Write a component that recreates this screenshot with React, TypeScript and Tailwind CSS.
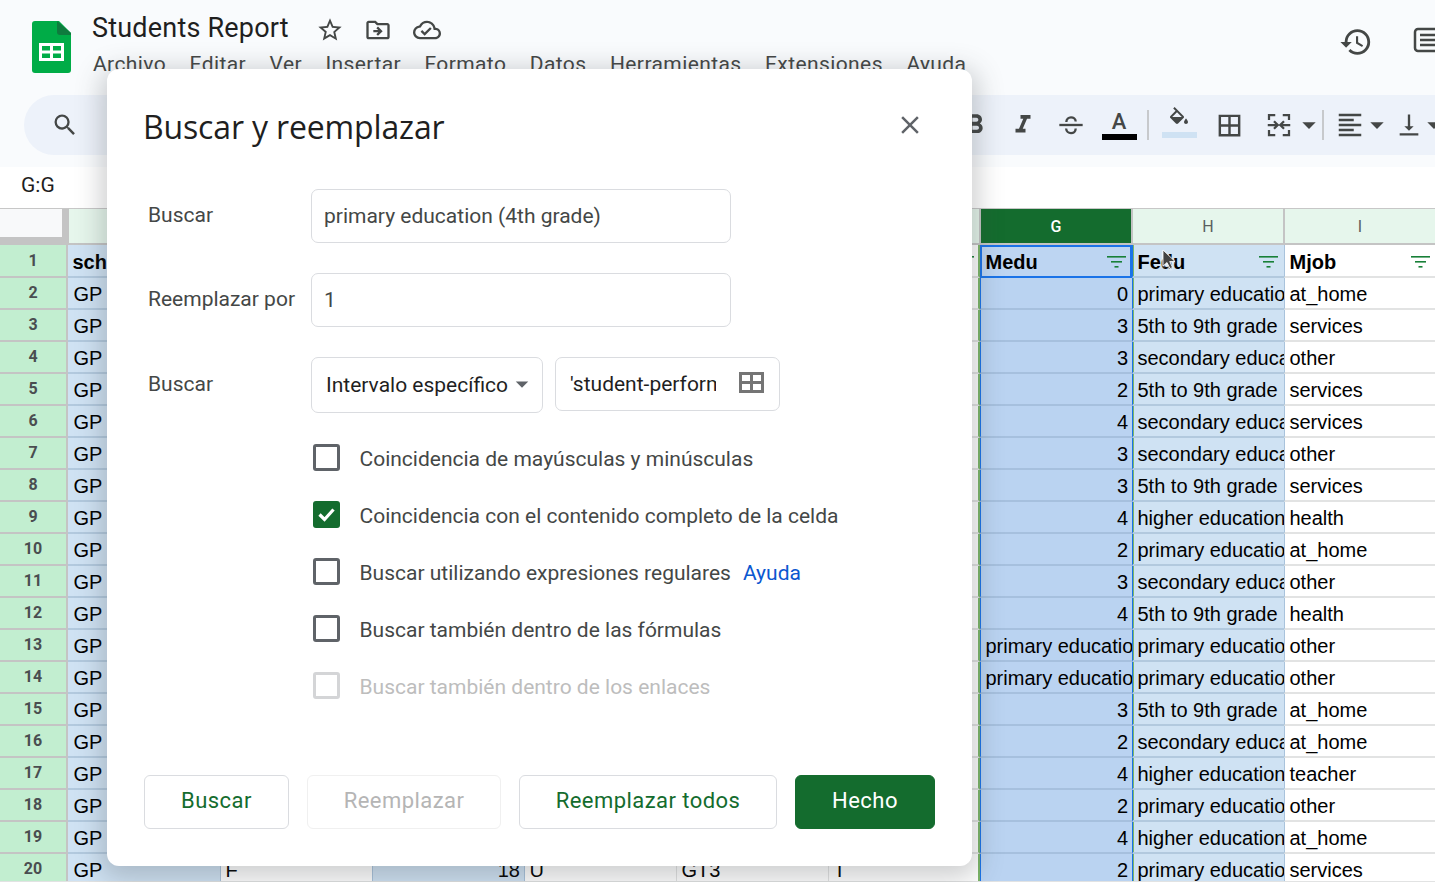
import React from "react";
import {
  MdStarBorder, MdOutlineDriveFileMove, MdOutlineCloudDone, MdHistory, MdSearch, MdUndo,
  MdFormatBold, MdFormatItalic, MdBorderAll, MdFormatAlignLeft,
  MdVerticalAlignBottom, MdArrowDropDown, MdClose,
} from "react-icons/md";

const ui = "font-['Roboto',sans-serif]";
const arial = "font-['Liberation_Sans',Arial,sans-serif]";

const P = "primary education (4th grade)", F5 = "5th to 9th grade", S = "secondary education", H = "higher education";
const medu = ["0","3","3","2","4","3","3","4","2","3","4",P,P,"3","2","4","2","4","2"];
const fedu = [P,F5,S,F5,S,S,F5,H,P,S,F5,P,P,F5,S,H,P,H,P];
const mjob = ["at_home","services","other","services","services","other","services","health","at_home","other","health","other","other","at_home","at_home","teacher","other","at_home","services"];
const cols = ["A","B","C","D","E","F","G","H","I"];
const heads = ["school","sex","age","address","famsize","Pstatus","Medu","Fedu","Mjob"];

const FilterIcon = () => (
  <svg width="19" height="12" viewBox="0 0 19 12" className="shrink-0" fill="#188038">
    <rect x="0" y="0" width="19" height="1.6" />
    <rect x="4" y="5" width="11" height="1.6" />
    <rect x="7.5" y="10" width="4" height="1.6" />
  </svg>
);

function cellClass(c: number) {
  switch (c) {
    case 0: return "bg-[#cfe2f3] border-b-2 border-b-[#b2c9de]";
    case 1: return "bg-white border-b-2 border-b-[#e2e3e3] border-l border-l-[#a9c3dc]";
    case 2: return "bg-[#cfe2f3] border-b-2 border-b-[#b2c9de] border-l border-l-[#a9c3dc]";
    case 3: return "bg-white border-b-2 border-b-[#e2e3e3] border-l border-l-[#a9c3dc]";
    case 4: return "bg-white border-b-2 border-b-[#e2e3e3] border-l border-l-[#e2e3e3]";
    case 5: return "bg-white border-b-2 border-b-[#e2e3e3] border-l border-l-[#e2e3e3] border-r-2 border-r-[#7cb668]";
    case 6: return "bg-[#bad3f1] border-b-2 border-b-[#a6c0de] border-l border-l-[#1a73e8]";
    case 7: return "bg-[#cfe2f3] border-b-2 border-b-[#b2c9de] border-l border-l-[#1a73e8] shadow-[inset_1px_0_0_#7cb668]";
    default: return "bg-white border-b-2 border-b-[#e2e3e3] border-l border-l-[#a9c3dc]";
  }
}

function Grid() {
  return (
    <div className={`grid grid-cols-[68px_repeat(9,152px)] grid-rows-[37px_33px] auto-rows-[32px] w-[1436px] ${arial} text-[20px] text-black`}>
      <div className="border-t border-t-[#c7c7c7] bg-[#c4c4c4] border-b-2 border-b-[#c4c4c4] pr-[6px]">
        <div className="h-[28px] bg-[#f8f9fa]" />
      </div>
      {cols.map((c) => (
        <div
          key={c}
          className={`flex items-center justify-center border-t border-t-[#c7c7c7] border-b-2 border-b-[#c4c4c4] border-x border-x-[#c4c4c4] pt-[2px] text-[16px] ${ui} ${
            c === "G" ? "bg-[#146c2e] text-white font-medium" : "bg-[#e6f6ec] text-[#5a5e61]"
          }`}
        >
          {c}
        </div>
      ))}

      <RowHead n={1} />
      {heads.map((h, c) => (
        <div
          key={h}
          className={`flex items-center justify-between font-bold overflow-hidden whitespace-nowrap ${
            c === 6
              ? "bg-[#bdd5f2] border-2 border-[#1a73e8] pl-[3.5px] pr-[4px]"
              : c === 5
              ? `${cellClass(c)} pt-[2px] pl-[4.5px] pr-[4px]`
              : `${cellClass(c)} pt-[2px] pl-[4.5px] pr-[6px]`
          }`}
        >
          <span>{h}</span>
          <FilterIcon />
        </div>
      ))}

      {medu.map((m, i) => {
        const row = ["GP", "F", "18", "U", "GT3", "T", m, fedu[i], mjob[i]];
        return (
          <React.Fragment key={i}>
            <RowHead n={i + 2} />
            {row.map((v, c) => {
              const right = v.length <= 2 && /^\d+$/.test(v);
              return (
                <div
                  key={c}
                  className={`flex items-center overflow-hidden whitespace-nowrap pt-[2px] ${right ? "justify-end pr-[4px]" : c === 0 ? "pl-[5.5px]" : "pl-[4.5px]"} ${cellClass(c)}`}
                >
                  {v}
                </div>
              );
            })}
          </React.Fragment>
        );
      })}
    </div>
  );
}

function RowHead({ n }: { n: number }) {
  return (
    <div className={`flex items-center justify-center bg-[#c2eed0] border-r-2 border-r-[#c4c4c4] border-b-2 border-b-[#c4c4c4] text-[16px] font-bold text-[#4a4d50] ${ui}`}>
      {n}
    </div>
  );
}

const SheetsLogo = () => (
  <svg width="39" height="52" viewBox="0 0 39 52" className="shrink-0">
    <path d="M3 0h24l12 12v37a3 3 0 0 1-3 3H3a3 3 0 0 1-3-3V3a3 3 0 0 1 3-3z" fill="#00ac47" />
    <path d="M25 0l14 12v2H28a3 3 0 0 1-3-3z" fill="#0f7b3e" />
    <path d="M7 22h25v18H7zM10 25v4.500h8V25zM21 25v4.500h8V25zM10 32.500V37h8v-4.500zM21 32.500V37h8v-4.500z" fill="#fff" fillRule="evenodd" />
  </svg>
);

const TB = ({ w = 48, children }: { w?: number; children: React.ReactNode }) => (
  <div style={{ width: w }} className="flex items-center justify-center shrink-0 text-[#444746]">
    {children}
  </div>
);

const Sep = () => <div className="w-[2px] h-[30px] bg-[#c7c9cc] shrink-0" />;

function Toolbar() {
  return (
    <div className="h-[60px] ml-[24px] w-[1500px] rounded-l-[30px] bg-[#edf2fa] flex items-center pl-[17px]">
      <TB><MdSearch size={28} /></TB>
      <div className="w-[6px] shrink-0" />
      <TB><MdUndo size={26} /></TB>
      <div className="w-[808px] shrink-0" />
      <TB><MdFormatBold size={32} /></TB>
      <TB><MdFormatItalic size={30} /></TB>
      <TB>
        <svg width="28" height="28" viewBox="0 0 24 24" fill="none" stroke="#444746" strokeWidth="2">
          <path d="M2 12h20" />
          <path d="M8 9.500C8 7 10 5.500 12 5.500s4 1.200 4 3.500" />
          <path d="M7.800 15c.2 2.600 2.200 4 4.200 4s4-1.300 4-4" />
        </svg>
      </TB>
      <TB>
        <div className="flex flex-col items-center w-[35px]">
          <span className={`${ui} text-[22px] leading-[24px] font-medium text-[#444746]`}>A</span>
          <div className="w-[35px] h-[6px] bg-black" />
        </div>
      </TB>
      <div className="w-[4px] shrink-0" />
      <Sep />
      <div className="w-[6px] shrink-0" />
      <TB w={48}>
        <div className="flex flex-col items-center w-[35px] -mt-[6px]">
          <svg width="24" height="24" viewBox="0 0 24 24" fill="#444746" className="mb-[1px]">
            <path d="M16.56 8.94L7.62 0 6.21 1.41l2.380 2.38-5.150 5.150c-.59.59-.59 1.540 0 2.120l5.500 5.500c.29.29.68.44 1.060.44s.77-.15 1.060-.44l5.500-5.500c.59-.58.59-1.530 0-2.120zM5.210 10L10 5.210 14.790 10H5.210zM19 11.500s-2 2.170-2 3.500c0 1.100.9 2 2 2s2-.9 2-2c0-1.330-2-3.500-2-3.500z" />
            <path d="M4.500 10h11L10 15.500z" />
          </svg>
          <div className="w-[35px] h-[6px] bg-[#cfe2f3]" />
        </div>
      </TB>
      <TB w={52}><MdBorderAll size={29} /></TB>
      <TB w={47}>
        <svg width="30" height="30" viewBox="0 0 24 24" fill="none" stroke="#444746" strokeWidth="1.800">
          <path d="M9 4H4v4M4 16v4h5M15 4h5v4M20 16v4h-5M3 12h7.500M8 9l3 3-3 3M21 12h-7.500M16 9l-3 3 3 3" />
        </svg>
      </TB>
      <TB w={14}><MdArrowDropDown size={32} className="shrink-0" /></TB>
      <div className="w-[6px] shrink-0" />
      <Sep />
      <TB w={51}><MdFormatAlignLeft size={30} /></TB>
      <TB w={4}><MdArrowDropDown size={32} className="shrink-0" /></TB>
      <div className="w-[7px] shrink-0" />
      <TB w={46}><MdVerticalAlignBottom size={28} /></TB>
      <TB w={4}><MdArrowDropDown size={32} className="shrink-0" /></TB>
    </div>
  );
}

function Header() {
  return (
    <div className="relative h-[95px] flex pl-[32px] pt-[21px] shrink-0">
      <SheetsLogo />
      <div className="ml-[21px] -mt-[7px]">
        <div className="flex items-center h-[28px] mt-[-1px] pt-[1px]">
          <span className={`${ui} text-[27px] leading-[32px] tracking-[0.2px] text-[#1f1f1f]`}>Students Report</span>
          <span className="ml-[27px] mt-[4px] text-[#444746]"><MdStarBorder size={28} /></span>
          <span className="ml-[20px] mt-[4px] text-[#444746]"><MdOutlineDriveFileMove size={28} /></span>
          <span className="ml-[21px] mt-[4px] text-[#444746]"><MdOutlineCloudDone size={28} /></span>
        </div>
        <div className={`${ui} flex gap-[23.5px] text-[21px] leading-[28px] tracking-[0.4px] mt-[9px] ml-[1px] text-[#444746] whitespace-nowrap`}>
          {["Archivo","Editar","Ver","Insertar","Formato","Datos","Herramientas","Extensiones","Ayuda"].map((m) => (
            <span key={m}>{m}</span>
          ))}
        </div>
      </div>
      <div className="absolute left-[1339px] top-[25px] text-[#444746]"><MdHistory size={34} /></div>
      <svg className="absolute left-[1413px] top-[27px]" width="30" height="26" viewBox="0 0 30 26" fill="none" stroke="#444746" strokeWidth="2.500">
        <rect x="2" y="2" width="30" height="22" rx="3" />
        <path d="M7 8h20M7 13h20M7 18h20" />
      </svg>
    </div>
  );
}

function Box({ className = "", children }: { className?: string; children: React.ReactNode }) {
  return <div className={`flex items-center border border-[#dadce0] rounded-[7px] bg-white ${className}`}>{children}</div>;
}

function Check({ label, checked, disabled, help }: { label: string; checked?: boolean; disabled?: boolean; help?: boolean }) {
  return (
    <div className="h-[57px] flex items-center pl-[169px]">
      {checked ? (
        <div className="w-[27px] h-[27px] -mt-[2px] rounded-[3px] bg-[#146c2e] flex items-center justify-center">
          <svg width="21" height="21" viewBox="0 0 21 21" fill="none" stroke="#fff" strokeWidth="3.200">
            <path d="M3.500 10.500l5 5 9-10" />
          </svg>
        </div>
      ) : (
        <div className={`w-[27px] h-[27px] -mt-[2px] rounded-[3px] border-[3px] ${disabled ? "border-[#d4d5d7]" : "border-[#5f6368]"}`} />
      )}
      <span className={`ml-[19.5px] pt-[2px] text-[21px] ${disabled ? "text-[#bdbdbd]" : "text-[#444746]"}`}>{label}</span>
      {help && <span className="ml-[12px] pt-[2px] text-[21px] text-[#0b57d0]">Ayuda</span>}
    </div>
  );
}

function Btn({ w, children, kind = "normal" }: { w: number; children: React.ReactNode; kind?: "normal" | "off" | "main" }) {
  const c =
    kind === "main"
      ? "bg-[#146c2e] text-white border-[#146c2e]"
      : kind === "off"
      ? "border-[#f0f0f0] text-[#b5b5b5] bg-white"
      : "border-[#dadce0] text-[#146c2e] bg-white";
  return (
    <div style={{ width: w }} className={`h-[54px] rounded-[6px] border flex items-center justify-center pb-[3px] text-[22px] font-[450] tracking-[0.45px] ${c}`}>
      {children}
    </div>
  );
}

function Dialog() {
  return (
    <div className={`${ui} absolute left-[107px] top-[69px] w-[865px] h-[797px] bg-white rounded-[12px] shadow-[0_6px_26px_6px_rgba(60,64,67,0.25)] pt-[36px] pl-[37px] pr-[37px]`}>
      <div className="flex items-center justify-between h-[44px]">
        <span className="font-['Open_Sans',sans-serif] -ml-[1px] text-[32px] leading-[44px] tracking-[-0.15px] text-[#1f1f1f]">Buscar y reemplazar</span>
        <MdClose size={30} className="text-[#5f6368] mr-[10px] -mt-[4px]" />
      </div>

      <div className="mt-[40px] flex items-center h-[54px]">
        <span className="w-[167px] pl-[4px] text-[21px] text-[#444746]">Buscar</span>
        <Box className="w-[420px] h-[54px] pl-[12px] pt-[2px] text-[21px] text-[#444746]">primary education (4th grade)</Box>
      </div>
      <div className="mt-[30px] flex items-center h-[54px]">
        <span className="w-[167px] pl-[4px] text-[21px] text-[#444746]">Reemplazar por</span>
        <Box className="w-[420px] h-[54px] pl-[12px] pt-[2px] text-[21px] text-[#444746]">1</Box>
      </div>
      <div className="mt-[30px] flex items-start h-[56px]">
        <span className="w-[167px] pl-[4px] text-[21px] leading-[54px] text-[#444746]">Buscar</span>
        <Box className="w-[232px] h-[56px] pl-[14px] text-[21px] text-[#1f1f1f]">
          <span className="pt-[2px]">Intervalo específico</span>
          <MdArrowDropDown size={30} className="text-[#5f6368] -ml-[1px] -mt-[2px]" />
        </Box>
        <Box className="w-[225px] h-[54px] ml-[12px] pl-[14px] text-[21px] text-[#1f1f1f]">
          <span className="w-[146px] pt-[2px] overflow-hidden whitespace-nowrap">'student-performance</span>
          <svg width="26" height="22" viewBox="0 0 26 22" fill="none" stroke="#757575" strokeWidth="3" className="ml-[23px] -mt-[2px]">
            <rect x="1.500" y="1.500" width="22" height="18" />
            <path d="M12.500 1.500v18M1.500 10.500h22" />
          </svg>
        </Box>
      </div>

      <div className="mt-[17px]">
        <Check label="Coincidencia de mayúsculas y minúsculas" />
        <Check label="Coincidencia con el contenido completo de la celda" checked />
        <Check label="Buscar utilizando expresiones regulares" help />
        <Check label="Buscar también dentro de las fórmulas" />
        <Check label="Buscar también dentro de los enlaces" disabled />
      </div>

      <div className="mt-[60px] flex gap-[18px]">
        <Btn w={145}>Buscar</Btn>
        <Btn w={194} kind="off">Reemplazar</Btn>
        <Btn w={258}>Reemplazar todos</Btn>
        <Btn w={140} kind="main">Hecho</Btn>
      </div>
    </div>
  );
}

export default function App() {
  return (
    <div className="relative w-[1435px] h-[882px] overflow-hidden bg-[#f9fbfd] flex flex-col">
      <Header />
      <div className="shrink-0 h-[72px]">
        <Toolbar />
      </div>
      <div className={`${ui} shrink-0 h-[41px] bg-white flex items-center pl-[21px] pb-[4px] text-[21px] text-[#1f1f1f]`}>G:G</div>
      <div className="flex-1 min-h-0 overflow-hidden"><Grid /></div>
      <div className="h-px bg-[#e2e3e3] shrink-0" />
      <Dialog />
      <svg className="absolute left-[1161px] top-[249px] drop-shadow-[0_1px_1px_rgba(255,255,255,0.9)]" width="16" height="22" viewBox="0 0 16 22">
        <path d="M2 1v16l4-3.500 3 6 2.500-1-2.800-6H14z" fill="#444" stroke="#fff" strokeWidth="0.800" />
      </svg>
    </div>
  );
}
